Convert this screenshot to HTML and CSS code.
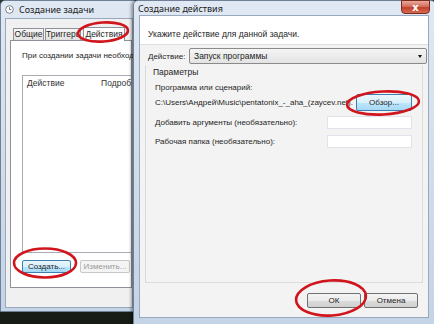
FILE: index.html
```html
<!DOCTYPE html>
<html lang="ru">
  <head>
    <meta charset="UTF-8" />
    <title>Создание действия</title>
    <link rel="stylesheet" href="styles.css">
  </head>
  <body>
    <!-- Task window (behind) -->
    <div class="win win-task">
      <div class="titlebar">
        <svg class="clock" width="9" height="9" viewBox="0 0 9 9">
          <circle cx="4.5" cy="4.5" r="3.8" fill="#fff" stroke="#6c7480" stroke-width="0.9"/>
          <path d="M4.5 2.2 V4.6 H6.4" fill="none" stroke="#4a5260" stroke-width="0.8"/>
        </svg>
        <span class="title">Создание задачи</span>
      </div>
      <div class="client">
        <div class="tabs">
          <span class="tab tab-general">Общие</span>
          <span class="tab tab-trig">Триггеры</span>
          <span class="tab tab-on">Действия</span>
        </div>
        <div class="panel">
          <p class="hint">При создании задачи необход</p>
          <div class="listbox">
            <div class="list-head">
              <span class="col-a">Действие</span>
              <span class="col-b">Подроб</span>
            </div>
          </div>
          <div class="panel-buttons">
            <span class="btn btn-create">Создать...</span>
            <span class="btn btn-flat">Изменить...</span>
          </div>
        </div>
      </div>
    </div>

    <!-- Action window (front) -->
    <div class="win win-action">
      <div class="titlebar">
        <span class="title">Создание действия</span>
        <span class="close">x</span>
      </div>
      <div class="client">
        <div class="header">Укажите действие для данной задачи.</div>
        <div class="body">
          <div class="row-action">
            <span class="label">Действие:</span>
            <div class="select">
              <span>Запуск программы</span>
              <span class="arrow"></span>
            </div>
          </div>
          <div class="group">
            <div class="legend">Параметры</div>
            <div class="field-label">Программа или сценарий:</div>
            <div class="row-path">
              <span class="path">C:\Users\Андрей\Music\pentatonix_-_aha_(zaycev.net).</span>
              <span class="btn btn-browse">Обзор...</span>
            </div>
            <div class="row-field">
              <span class="label">Добавить аргументы (необязательно):</span>
              <span class="input"></span>
            </div>
            <div class="row-field">
              <span class="label">Рабочая папка (необязательно):</span>
              <span class="input"></span>
            </div>
          </div>
          <div class="dialog-buttons">
            <span class="btn btn-ok">ОК</span>
            <span class="btn btn-cancel">Отмена</span>
          </div>
        </div>
      </div>
    </div>

    <!-- Red hand-drawn marks -->
    <svg class="marks" width="434" height="324" viewBox="0 0 434 324">
      <g fill="none" stroke="#d1151c" stroke-width="2.6">
        <ellipse cx="103" cy="32" rx="25" ry="9.5" transform="rotate(-4 103 32)"/>
        <ellipse cx="383" cy="103" rx="36" ry="11.5" transform="rotate(-3 383 103)"/>
        <ellipse cx="45" cy="263" rx="31" ry="14.5"/>
        <ellipse cx="331" cy="298" rx="35" ry="17.5" transform="rotate(-4 331 298)"/>
      </g>
    </svg>
  </body>
</html>
```

FILE: styles.css
```css
* {
  margin: 0;
  padding: 0;
  box-sizing: border-box;
}

html,
body {
  width: 434px;
  height: 324px;
  overflow: hidden;
}

body {
  position: relative;
  background: linear-gradient(180deg, #2a3526 0%, #161c14 100%);
  font-family: 'Liberation Sans', Arial, sans-serif;
  font-size: 8px;
  color: #1e1e1e;
}

/* Windows sit on a desktop, so they are placed by coordinates */
.win {
  position: absolute;
  top: 0;
  display: flex;
  flex-direction: column;
  background: linear-gradient(180deg, #dfe8f3 0%, #cfdbea 60%, #c4d3e6 100%);
  border: 1px solid #6f8197;
  border-radius: 5px 5px 0 0;
}

.titlebar {
  display: flex;
  align-items: center;
  font-family: 'Noto Sans', 'Liberation Sans', sans-serif;
  font-size: 9px;
  color: #1b1b1b;
}

.title {
  white-space: nowrap;
}

.client {
  flex: 1;
  display: flex;
  flex-direction: column;
  background: #f0f0f0;
  border: 1px solid #98a8bd;
}

/* ---- task window ---- */
.win-task {
  left: 0;
  width: 138px;
  height: 312px;
  overflow: hidden;
}

.win-task .titlebar {
  height: 17px;
  padding-left: 4px;
  gap: 5px;
}

.win-task .client {
  margin: 0 4px 3px 4px;
  padding: 7px 0 0 4px;
}

.tabs {
  display: flex;
  align-items: flex-end;
  height: 14px;
  padding-left: 3px;
}

.tab {
  height: 12px;
  line-height: 11px;
  font-size: 8.5px;
  text-align: center;
  overflow: hidden;
  background: linear-gradient(180deg, #f6f6f6, #e1e1e1);
  border: 1px solid #8e9199;
  border-bottom: none;
  white-space: nowrap;
}

.tab-general {
  width: 31px;
}

.tab-trig {
  width: 36px;
  margin-left: 1px;
}

.tab-on {
  width: 42px;
  height: 14px;
  line-height: 13px;
  margin-left: 2px;
  background: #fff;
  position: relative;
  top: 1px;
}

.panel {
  flex: 1;
  display: flex;
  flex-direction: column;
  margin-bottom: 19px;
  background: #fff;
  border: 1px solid #8e9199;
  padding: 10px 0 0 11px;
}

.hint {
  font-size: 8px;
  white-space: nowrap;
  height: 24px;
}

.listbox {
  height: 178px;
  border: 1px solid #a9acb3;
  border-right: none;
  background: #fff;
}

.list-head {
  display: flex;
  height: 14px;
  align-items: center;
  padding-left: 4px;
  font-size: 8.5px;
  white-space: nowrap;
  color: #333;
}

.col-a {
  width: 78px;
}

.panel-buttons {
  display: flex;
  gap: 9px;
  margin-top: 7px;
}

.btn {
  display: flex;
  align-items: center;
  justify-content: center;
  height: 13px;
  font-size: 8px;
  white-space: nowrap;
  background: linear-gradient(180deg, #f4f4f4 0%, #ebebeb 50%, #dcdcdc 51%, #d0d0d0 100%);
  border: 1px solid #707070;
  border-radius: 2px;
}

.btn-create {
  width: 49px;
  border-color: #3c7fb1;
  background: linear-gradient(180deg, #eaf6fd 0%, #d9f0fc 50%, #bee6fd 51%, #a7d9f5 100%);
}

.btn-flat {
  width: 50px;
  background: #f4f4f4;
  border-color: #c8c8c8;
  color: #9a9a9a;
}

/* ---- action window ---- */
.win-action {
  left: 133px;
  width: 303px;
  height: 326px;
  box-shadow: -2px 0 3px rgba(0, 0, 0, 0.35);
}

.win-action .titlebar {
  height: 14px;
  padding-left: 4px;
  justify-content: space-between;
  align-items: flex-start;
  padding-top: 1px;
}

.close {
  width: 29px;
  height: 14px;
  margin: -2px 5px 0 0;
  display: flex;
  align-items: center;
  justify-content: center;
  font-family: 'DejaVu Sans', sans-serif;
  font-weight: bold;
  font-size: 10px;
  color: #fff;
  background: linear-gradient(180deg, #e9a99c 0%, #d4705e 45%, #c2412c 55%, #d66a4f 100%);
  border: 1px solid #7a2b20;
  border-radius: 0 0 4px 4px;
}

.win-action .client {
  margin: 0 6px 7px 5px;
}

.header {
  height: 29px;
  padding: 13px 0 0 8px;
  font-size: 8.5px;
  background: #fff;
  border-bottom: 1px solid #dfdfdf;
}

.body {
  flex: 1;
  display: flex;
  flex-direction: column;
  padding: 3px 1px 0 5px;
  background: #f3f3f3;
}

.row-action {
  display: flex;
  align-items: center;
  height: 16px;
  padding-left: 3px;
  font-size: 8.5px;
}

.row-action .label {
  width: 41px;
  font-size: 8px;
  white-space: nowrap;
}

.select {
  flex: 1;
  display: flex;
  align-items: center;
  justify-content: space-between;
  height: 16px;
  padding: 0 4px;
  background: linear-gradient(180deg, #f5f5f5, #e3e3e3);
  border: 1px solid #8a8a8a;
  border-radius: 2px;
}

.arrow {
  width: 0;
  height: 0;
  border-left: 2.5px solid transparent;
  border-right: 2.5px solid transparent;
  border-top: 3px solid #111;
}

.group {
  display: flex;
  flex-direction: column;
  width: 278px;
  height: 218px;
  margin-top: 1px;
  padding: 0 0 0 9px;
  border: 1px solid #dcdcdc;
  border-top-color: transparent;
  border-left-color: #d8d8d8;
}

.legend {
  margin-left: -2px;
  height: 13px;
  line-height: 13px;
  font-size: 8.5px;
}

.field-label {
  margin-top: 3px;
  height: 11px;
  line-height: 11px;
}

.row-path {
  display: flex;
  align-items: center;
  margin-top: 1px;
  height: 17px;
}

.path {
  width: 201px;
  white-space: nowrap;
  overflow: hidden;
}

.btn-browse {
  width: 56px;
  height: 17px;
  border-color: #3c7fb1;
  background: linear-gradient(180deg, #eaf6fd 0%, #d9f0fc 50%, #bee6fd 51%, #a7d9f5 100%);
}

.row-field {
  display: flex;
  align-items: center;
  justify-content: space-between;
  width: 257px;
  height: 13px;
  margin-top: 5px;
}

.row-field + .row-field {
  margin-top: 6px;
}

.input {
  width: 85px;
  height: 13px;
  background: #fff;
  border: 1px solid #e2e3ea;
}

.dialog-buttons {
  display: flex;
  gap: 3px;
  margin: 10px 0 0 162px;
}

.btn-ok,
.btn-cancel {
  width: 54px;
  height: 15px;
}

/* ---- overlay marks ---- */
.marks {
  position: absolute;
  left: 0;
  top: 0;
  pointer-events: none;
}
```
